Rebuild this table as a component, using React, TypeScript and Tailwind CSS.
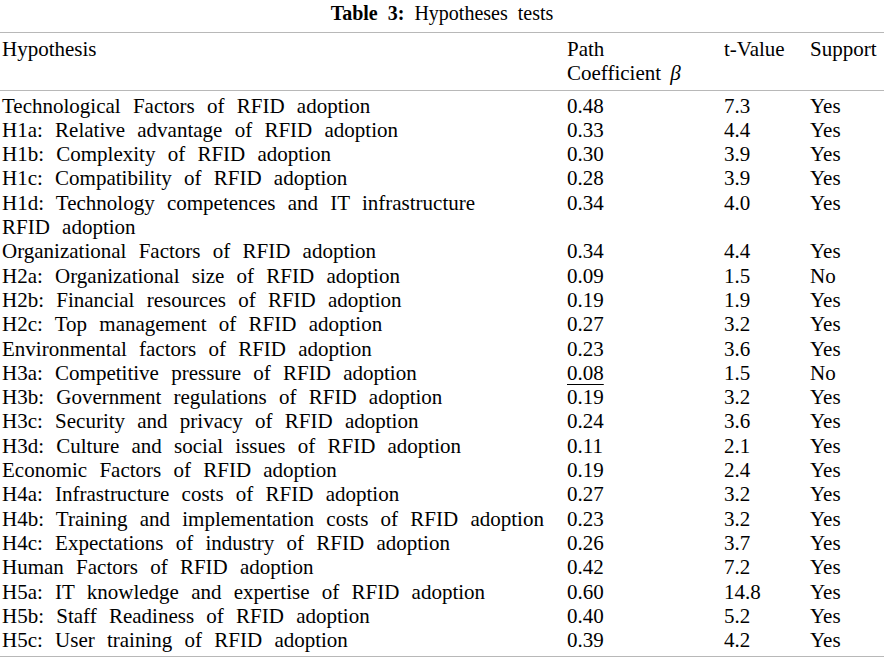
import React from 'react';

type Row = { h: React.ReactNode; b: string; t: string; s: string; underline?: boolean };

const rows: Row[] = [
  { h: 'Technological Factors of RFID adoption', b: '0.48', t: '7.3', s: 'Yes' },
  { h: 'H1a: Relative advantage of RFID adoption', b: '0.33', t: '4.4', s: 'Yes' },
  { h: 'H1b: Complexity of RFID adoption', b: '0.30', t: '3.9', s: 'Yes' },
  { h: 'H1c: Compatibility of RFID adoption', b: '0.28', t: '3.9', s: 'Yes' },
  {
    h: (
      <>
        H1d: Technology competences and IT infrastructure
        <br />
        RFID adoption
      </>
    ),
    b: '0.34',
    t: '4.0',
    s: 'Yes',
  },
  { h: 'Organizational Factors of RFID adoption', b: '0.34', t: '4.4', s: 'Yes' },
  { h: 'H2a: Organizational size of RFID adoption', b: '0.09', t: '1.5', s: 'No' },
  { h: 'H2b: Financial resources of RFID adoption', b: '0.19', t: '1.9', s: 'Yes' },
  { h: 'H2c: Top management of RFID adoption', b: '0.27', t: '3.2', s: 'Yes' },
  { h: 'Environmental factors of RFID adoption', b: '0.23', t: '3.6', s: 'Yes' },
  { h: 'H3a: Competitive pressure of RFID adoption', b: '0.08', t: '1.5', s: 'No', underline: true },
  { h: 'H3b: Government regulations of RFID adoption', b: '0.19', t: '3.2', s: 'Yes' },
  { h: 'H3c: Security and privacy of RFID adoption', b: '0.24', t: '3.6', s: 'Yes' },
  { h: 'H3d: Culture and social issues of RFID adoption', b: '0.11', t: '2.1', s: 'Yes' },
  { h: 'Economic Factors of RFID adoption', b: '0.19', t: '2.4', s: 'Yes' },
  { h: 'H4a: Infrastructure costs of RFID adoption', b: '0.27', t: '3.2', s: 'Yes' },
  { h: 'H4b: Training and implementation costs of RFID adoption', b: '0.23', t: '3.2', s: 'Yes' },
  { h: 'H4c: Expectations of industry of RFID adoption', b: '0.26', t: '3.7', s: 'Yes' },
  { h: 'Human Factors of RFID adoption', b: '0.42', t: '7.2', s: 'Yes' },
  { h: 'H5a: IT knowledge and expertise of RFID adoption', b: '0.60', t: '14.8', s: 'Yes' },
  { h: 'H5b: Staff Readiness of RFID adoption', b: '0.40', t: '5.2', s: 'Yes' },
  { h: 'H5c: User training of RFID adoption', b: '0.39', t: '4.2', s: 'Yes' },
];

export default function App() {
  return (
    <div className="w-[884px] h-[661px] bg-white text-black font-['Liberation_Serif',serif] overflow-hidden">
      <div className="pt-[1px] h-[32px] text-center text-[20px] leading-[24px] [word-spacing:5px]">
        <span className="font-bold">Table 3:</span> Hypotheses tests
      </div>
      <table className="w-full border-collapse text-[21px] leading-[24.3px] [word-spacing:7px] table-fixed">
        <colgroup>
          <col className="w-[567px]" />
          <col className="w-[157px]" />
          <col className="w-[86px]" />
          <col />
        </colgroup>
        <thead>
          <tr className="border-t-[1.5px] border-b-[1.5px] border-[#b8b8b8] align-top text-left">
            <th className="font-normal pl-[2px] pt-[4px] pb-[4px]">Hypothesis</th>
            <th className="font-normal pt-[4px] pb-[4px] [word-spacing:4px]">
              Path
              <br />
              Coefficient <span className="italic">β</span>
            </th>
            <th className="font-normal pt-[4px] pb-[4px] [word-spacing:0]">t-Value</th>
            <th className="font-normal pt-[4px] pb-[4px] whitespace-nowrap">Support</th>
          </tr>
        </thead>
        <tbody className="border-b-[1.5px] border-[#b8b8b8]">
          {rows.map((r, i) => (
            <tr key={i} className="align-top">
              <td className={`pl-[2px] whitespace-nowrap ${i === 0 ? 'pt-[3px]' : ''} ${i === rows.length - 1 ? 'pb-[4px]' : ''}`}>
                {r.h}
              </td>
              <td className={i === 0 ? 'pt-[3px]' : ''}>
                <span className={r.underline ? 'underline decoration-1 underline-offset-[4px]' : ''}>{r.b}</span>
              </td>
              <td className={i === 0 ? 'pt-[3px]' : ''}>{r.t}</td>
              <td className={i === 0 ? 'pt-[3px]' : ''}>{r.s}</td>
            </tr>
          ))}
        </tbody>
      </table>
    </div>
  );
}
